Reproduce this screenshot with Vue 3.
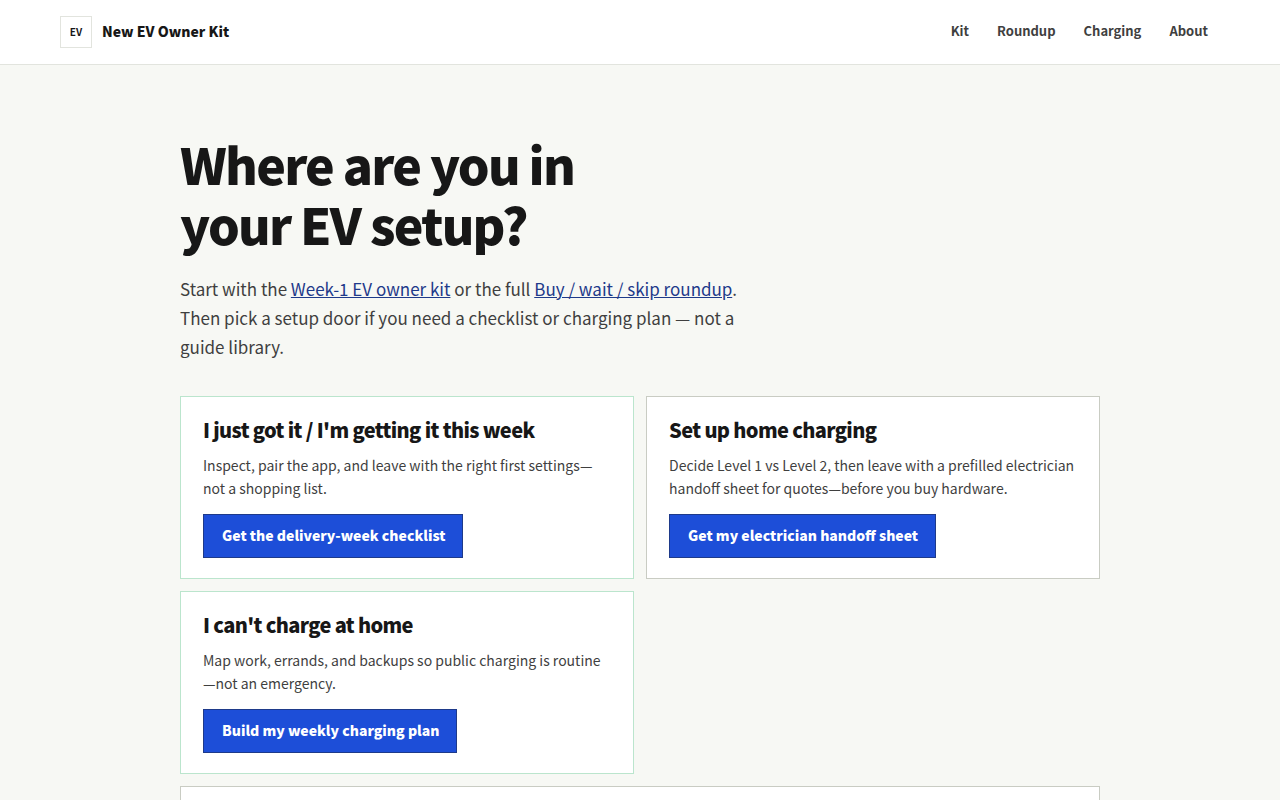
<script setup>
const nav = ['Kit', 'Roundup', 'Charging', 'About']
const doors = [
  { title: "I just got it / I'm getting it this week", text: 'Inspect, pair the app, and leave with the right first settings—not a shopping list.', action: 'Get the delivery-week checklist', green: true },
  { title: 'Set up home charging', text: 'Decide Level 1 vs Level 2, then leave with a prefilled electrician handoff sheet for quotes—before you buy hardware.', action: 'Get my electrician handoff sheet', green: false },
  { title: "I can't charge at home", text: 'Map work, errands, and backups so public charging is routine—not an emergency.', action: 'Build my weekly charging plan', green: true },
]
</script>

<template>
  <header class="site-header">
    <div class="bar">
      <a class="brand" href="#"><span class="mark">EV</span><span class="name">New EV Owner Kit</span></a>
      <nav class="nav" aria-label="Main">
        <a v-for="item in nav" :key="item" href="#">{{ item }}</a>
      </nav>
    </div>
  </header>
  <main class="main">
    <h1>Where are you in your EV setup?</h1>
    <p class="lead">
      Start with the <a href="#">Week-1 EV owner kit</a> or the full <a href="#">Buy / wait / skip roundup</a>.
      Then pick a setup door if you need a checklist or charging plan — not a guide library.
    </p>
    <div class="doors">
      <section v-for="door in doors" :key="door.title" class="door" :class="{ green: door.green }">
        <h2>{{ door.title }}</h2>
        <p>{{ door.text }}</p>
        <a class="button" href="#">{{ door.action }}</a>
      </section>
      <section class="door wide"></section>
    </div>
  </main>
</template>

<style>
body {
  background: #f7f8f4;
}
</style>

<style scoped>
.site-header,
.main {
  font-family: "Noto Sans CJK SC", "Noto Sans", sans-serif;
  color: #171717;
}
.site-header {
  background: #fff;
  border-bottom: 1px solid #e2e4de;
}
.bar {
  max-width: 1160px;
  height: 64px;
  margin: 0 auto;
  display: flex;
  align-items: center;
  justify-content: space-between;
}
.brand {
  display: flex;
  align-items: center;
  gap: 10px;
  color: #171717;
  font-size: 14px;
  font-weight: 900;
  text-decoration: none;
}
.name {
  padding-bottom: 2px;
}
.mark {
  box-sizing: border-box;
  width: 32px;
  height: 32px;
  padding-bottom: 2px;
  display: flex;
  align-items: center;
  justify-content: center;
  border: 1px solid #e2e4de;
  font-size: 10px;
  font-weight: 700;
}
.nav {
  display: flex;
  gap: 28px;
  margin-right: 12px;
  padding-bottom: 4px;
}
.nav a {
  color: #3f3f3f;
  font-size: 13px;
  font-weight: 700;
  text-decoration: none;
}
.main {
  max-width: 920px;
  margin: 0 auto;
  padding: 68px 24px 20px;
}
h1 {
  max-width: 480px;
  margin: 0 0 21px;
  font-size: 50px;
  line-height: 60px;
  font-weight: 900;
  letter-spacing: -0.035em;
}
.lead {
  max-width: 560px;
  margin: 0 0 35px;
  color: #3f3f3f;
  font-size: 17px;
  line-height: 29px;
}
.lead a {
  color: #1e3a8a;
}
.doors {
  display: grid;
  grid-template-columns: 1fr 1fr;
  gap: 12px;
}
.door {
  padding: 20px 22px;
  background: #fff;
  border: 1px solid #c9ccc3;
}
.green {
  border-color: #bbe5cd;
}
.wide {
  grid-column: 1 / -1;
}
h2 {
  margin: 0 0 11px;
  font-size: 20px;
  line-height: 26px;
  font-weight: 900;
  letter-spacing: -0.032em;
}
.door p {
  margin: 0 0 14px;
  color: #3f3f3f;
  font-size: 14px;
  line-height: 23px;
}
.button {
  display: inline-flex;
  align-items: center;
  box-sizing: border-box;
  height: 44px;
  padding: 0 17px 2px 18px;
  border: 1px solid #1e3a8a;
  background: #1d4ed8;
  color: #fff;
  font-size: 14px;
  font-weight: 900;
  text-decoration: none;
}
</style>
